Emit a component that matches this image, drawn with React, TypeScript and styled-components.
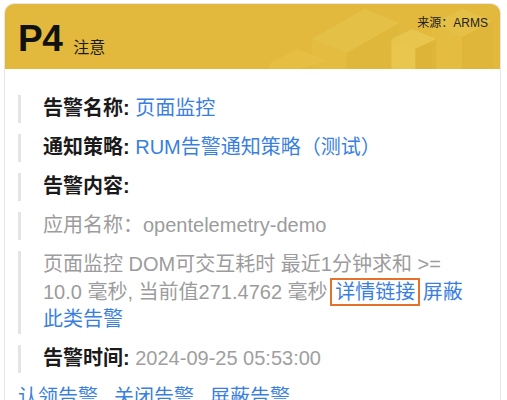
import * as React from "react";
import styled, {createGlobalStyle} from "styled-components";

const GlobalStyle = createGlobalStyle`
    html, body {
        margin: 0;
        padding: 0;
        background: #ffffff;
    }
    body {
        font-family: "Liberation Sans", "Noto Sans CJK SC", sans-serif;
        color: #1a1a1a;
    }
`;

const Page = styled.div`
    padding: 3px 6px 0 4px;
    height: 400px;
    overflow: hidden;
    box-sizing: border-box;
`;

const Card = styled.div`
    border: 1px solid #e6e6e6;
    border-bottom: none;
    border-radius: 10px 10px 0 0;
    overflow: hidden;
    background: #ffffff;
`;

const Header = styled.div`
    position: relative;
    height: 65px;
    background: #e2b93c;
    display: flex;
    align-items: flex-end;
    padding: 0 12px 12px 13px;
    box-sizing: border-box;
    overflow: hidden;
`;

const HeaderDeco = styled.svg`
    position: absolute;
    inset: 0;
    width: 100%;
    height: 100%;
`;

const Level = styled.span`
    position: relative;
    font-family: "Liberation Sans", sans-serif;
    font-weight: 700;
    font-size: 37px;
    line-height: 37px;
    color: #111111;
    letter-spacing: -0.5px;
`;

const LevelName = styled.span`
    position: relative;
    font-size: 16px;
    line-height: 16px;
    margin-left: 11px;
    margin-bottom: 1px;
    color: #1a1a1a;
`;

const Source = styled.span`
    position: absolute;
    top: 9px;
    right: 12px;
    font-size: 12px;
    color: #222222;
`;

const Body = styled.div`
    padding: 26px 13px 0 13px;
`;

const Quote = styled.div<{$muted?: boolean}>`
    border-left: 3px solid #e4e4e4;
    padding-left: 22px;
    padding-right: 20px;
    margin-bottom: 11.5px;
    font-size: 20px;
    line-height: 27.5px;
    color: ${({$muted}) => ($muted ? "#9c9c9c" : "#1a1a1a")};
`;

const Label = styled.span`
    font-weight: 600;
    color: #1a1a1a;
`;

const Value = styled.span<{$tone: "link" | "muted"}>`
    color: ${({$tone}) => ($tone === "link" ? "#3a7fe0" : "#a0a0a0")};
`;

const Link = styled.span<{$boxed?: boolean}>`
    color: #3a7fe0;
    ${({$boxed}) =>
        $boxed &&
        `
        outline: 2px solid #e6722a;
        outline-offset: 1px;
        padding: 0 2px;
    `}
`;

const Actions = styled.div`
    display: flex;
    gap: 16px;
    font-size: 20px;
    line-height: 27.5px;
    color: #3a7fe0;
`;

const Decorations = () => (
    <HeaderDeco viewBox="0 0 497 65" preserveAspectRatio="none" aria-hidden={true}>
        {/* small block, lower left */}
        <polygon points="266,59 294,45 324,57 296,65 266,65" fill="#ebcb53" opacity="0.3" />
        {/* long block */}
        <polygon points="308,35 361,5 396,19 343,49" fill="#ecce58" opacity="0.35" />
        <polygon points="308,35 343,49 343,65 308,65" fill="#e8c54a" opacity="0.3" />
        <polygon points="343,49 396,19 396,65 343,65" fill="#d9ae34" opacity="0.2" />
        {/* back block, right */}
        <polygon points="428,21 459,5 490,17 459,33" fill="#ecce58" opacity="0.35" />
        <polygon points="459,33 490,17 490,65 459,65" fill="#d8ad33" opacity="0.25" />
        <polygon points="428,21 459,33 459,65 428,65" fill="#e9c74d" opacity="0.25" />
        {/* tall block, front */}
        <polygon points="388,35 409,25 433,35 412,45" fill="#eed45f" opacity="0.5" />
        <polygon points="388,35 412,45 412,65 388,65" fill="#eed35c" opacity="0.55" />
        <polygon points="412,45 433,35 433,65 412,65" fill="#d6ab32" opacity="0.35" />
    </HeaderDeco>
);

export default function App() {
    return (
        <>
            <GlobalStyle />
            <Page>
                <Card>
                    <Header>
                        <Decorations />
                        <Level>P4</Level>
                        <LevelName>注意</LevelName>
                        <Source>来源：ARMS</Source>
                    </Header>
                    <Body>
                        <Quote>
                            <Label>告警名称:</Label> <Value $tone="link">页面监控</Value>
                        </Quote>
                        <Quote>
                            <Label>通知策略:</Label> <Value $tone="link">RUM告警通知策略（测试）</Value>
                        </Quote>
                        <Quote>
                            <Label>告警内容:</Label>
                        </Quote>
                        <Quote $muted>应用名称：opentelemetry-demo</Quote>
                        <Quote $muted>
                            页面监控 DOM可交互耗时 最近1分钟求和 &gt;= 10.0 毫秒, 当前值271.4762 毫秒{" "}
                            <Link $boxed>详情链接</Link> <Link>屏蔽此类告警</Link>
                        </Quote>
                        <Quote>
                            <Label>告警时间:</Label> <Value $tone="muted">2024-09-25 05:53:00</Value>
                        </Quote>
                        <Actions>
                            <span>认领告警</span>
                            <span>关闭告警</span>
                            <span>屏蔽告警</span>
                        </Actions>
                    </Body>
                </Card>
            </Page>
        </>
    );
}
